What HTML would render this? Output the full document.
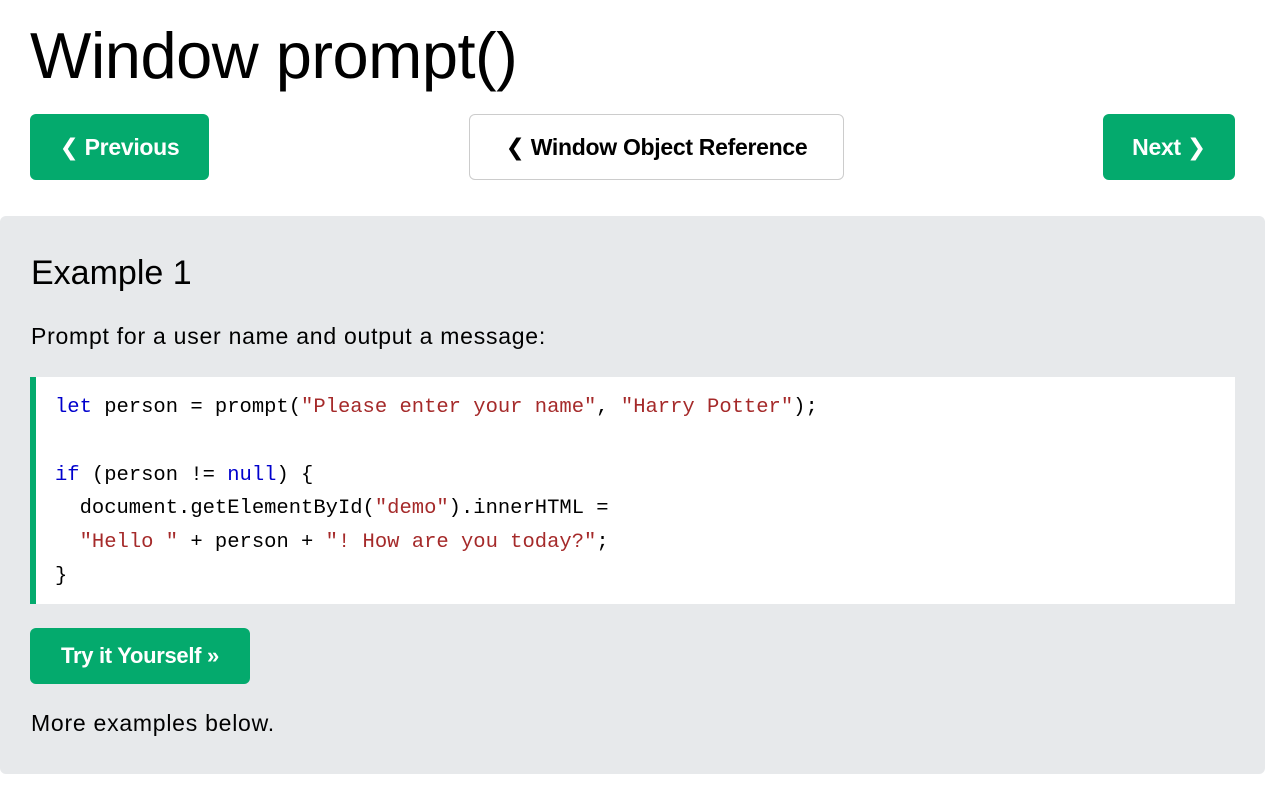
<!DOCTYPE html>
<html><head><meta charset="utf-8"><style>
body{margin:0;background:#fff;font-family:"Liberation Sans","DejaVu Sans",sans-serif;color:#000;width:1273px;height:805px;overflow:hidden;position:relative}
h1{position:absolute;left:30px;top:16px;margin:0;font-weight:normal;font-size:65px;line-height:80px;letter-spacing:-0.5px}
.btn{position:absolute;box-sizing:border-box;border-radius:6px;font-weight:bold;font-size:23px;display:flex;align-items:center;justify-content:center;letter-spacing:-0.3px}
.g{background:#04AA6D;color:#fff}
.w{background:#fff;border:1px solid #ccc;color:#000}
.panel{position:absolute;left:0;top:216px;width:1265px;height:558px;background:#E7E9EB;border-radius:6px}
.code{position:absolute;left:30px;top:161px;width:1205px;height:227px;background:#fff;border-left:6px solid #04AA6D;box-sizing:border-box;padding:14px 0 0 19px;font-family:"Liberation Mono","DejaVu Sans Mono",monospace;font-size:20.5px;line-height:33.8px;white-space:pre}
.k{color:#0000cd}.s{color:#a52a2a}
.t{font-size:23px;line-height:28px;letter-spacing:0.75px}
</style></head><body>
<h1>Window prompt()</h1>
<div class="btn g" style="left:30px;top:114px;width:179px;height:66px">❮ Previous</div>
<div class="btn w" style="left:469px;top:114px;width:375px;height:66px">❮ Window Object Reference</div>
<div class="btn g" style="left:1103px;top:114px;width:132px;height:66px">Next ❯</div>
<div class="panel">
<div style="position:absolute;left:31px;top:36px;font-size:34px;line-height:42px">Example 1</div>
<div class="t" style="position:absolute;left:31px;top:106px">Prompt for a user name and output a message:</div>
<div class="code"><span class="k">let</span> person = prompt(<span class="s">"Please enter your name"</span>, <span class="s">"Harry Potter"</span>);

<span class="k">if</span> (person != <span class="k">null</span>) {
  document.getElementById(<span class="s">"demo"</span>).innerHTML =
  <span class="s">"Hello "</span> + person + <span class="s">"! How are you today?"</span>;
}</div>
<div class="btn g" style="left:30px;top:412px;width:220px;height:56px;font-size:22px">Try it Yourself »</div>
<div class="t" style="position:absolute;left:31px;top:493px">More examples below.</div>
</div>
</body></html>
